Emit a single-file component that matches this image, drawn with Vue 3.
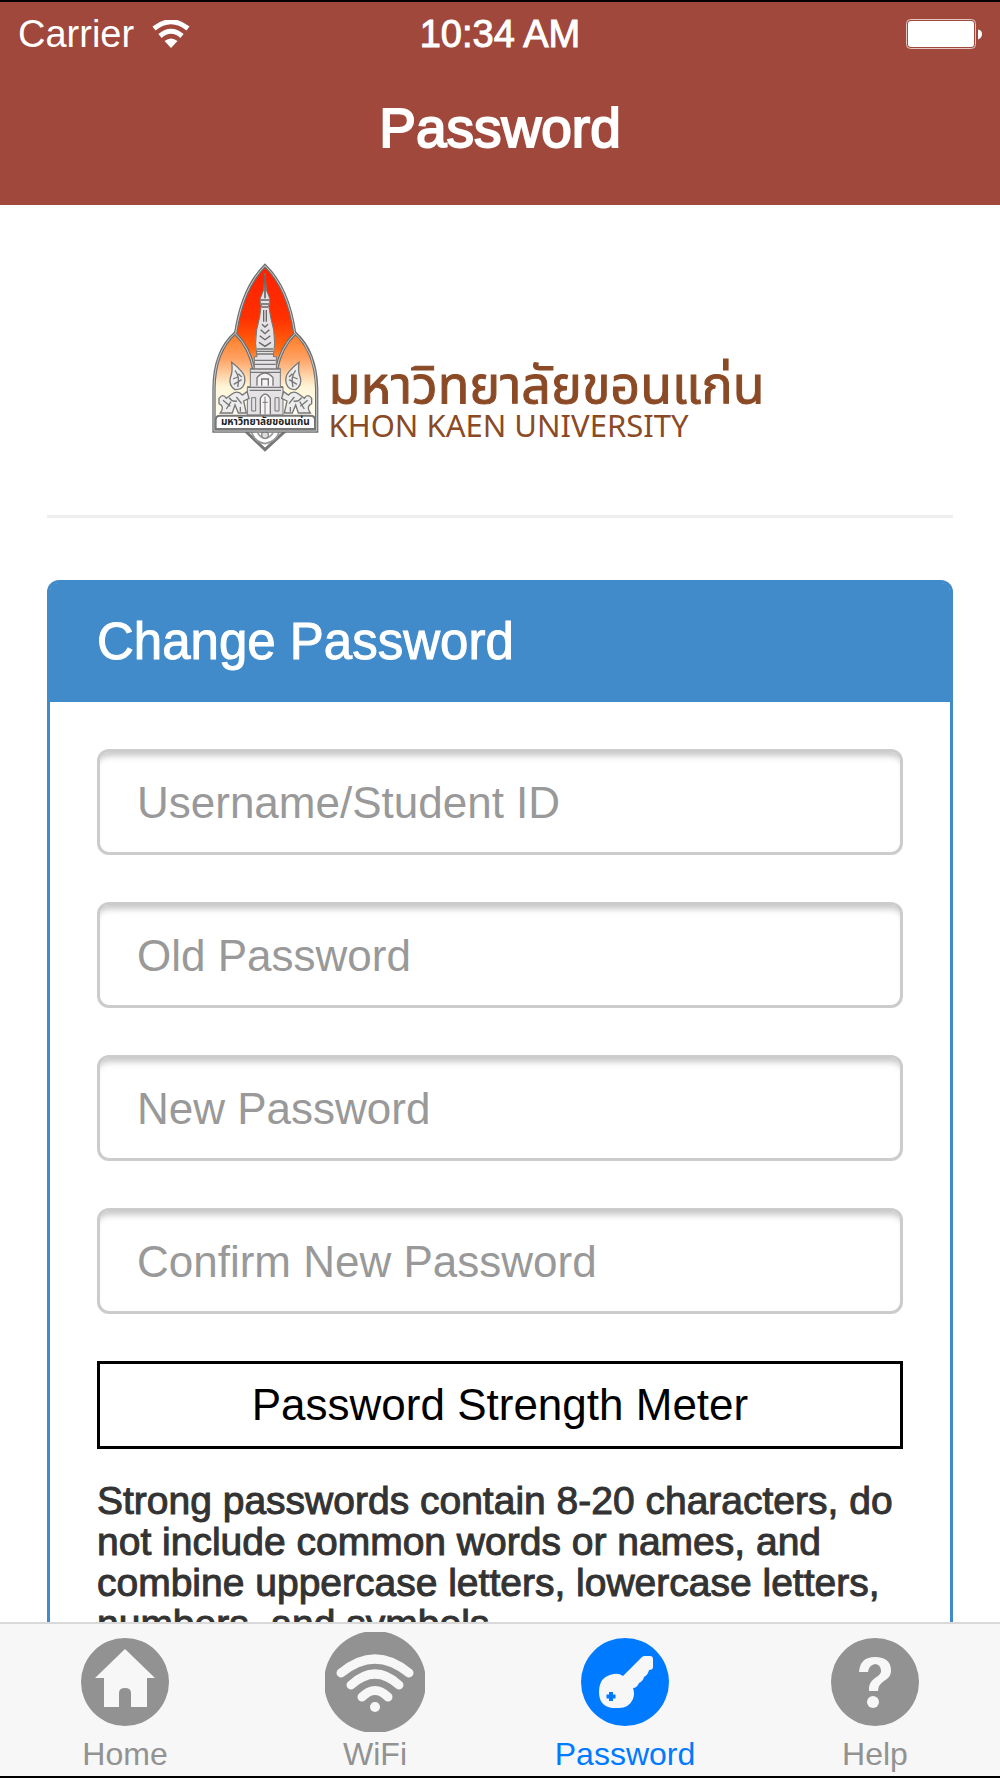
<template>
  <div class="app">
    <header class="top-bar">
      <div class="status-bar">
        <div class="carrier">
          <span>Carrier</span>
          <svg class="signal" viewBox="0 0 38 28" aria-hidden="true">
            <path d="M2 8.5Q19 -5 36 8.5" fill="none" stroke="#fff" stroke-width="5" />
            <path d="M8 16Q19 6.500 30 16" fill="none" stroke="#fff" stroke-width="5" />
            <path d="M12.500 21Q19 16 25.500 21L19 28Z" fill="#fff" />
          </svg>
        </div>
        <span class="clock">10:34 AM</span>
        <svg class="battery" viewBox="0 0 76 30" aria-hidden="true">
          <rect x="0.500" y="0.500" width="69" height="29" rx="4" fill="none" stroke="#e3c8c4" />
          <rect x="2" y="2" width="66" height="26" rx="3" fill="#fff" />
          <path d="M72 10.500Q76 11 76 15T72 20.500Z" fill="#fff" />
        </svg>
      </div>
      <h1 class="page-title">Password</h1>
    </header>

    <main class="content">
      <div class="brand">
        <svg class="emblem" viewBox="30 24 324 570" role="img" aria-label="Khon Kaen University">
          <defs>
            <linearGradient id="flame" x1="0" y1="0" x2="0" y2="1">
              <stop offset="0" stop-color="#ff2000" />
              <stop offset="0.500" stop-color="#ff3000" />
              <stop offset="0.800" stop-color="#ff6a10" />
              <stop offset="1" stop-color="#ffc890" />
            </linearGradient>
            <linearGradient id="petal" x1="0" y1="0" x2="0" y2="1">
              <stop offset="0" stop-color="#ff7a20" />
              <stop offset="0.250" stop-color="#ff9f60" />
              <stop offset="0.550" stop-color="#fff6d8" />
              <stop offset="1" stop-color="#fff" />
            </linearGradient>
          </defs>
          <path d="M130 525L192 584L256 525Z" fill="#fff" stroke="#777" stroke-width="9" />
          <path d="M152 532Q160 560 192 566Q226 560 234 532M170 534Q192 566 216 534" fill="none" stroke="#999" stroke-width="5" />
          <circle cx="192" cy="540" r="10" fill="#ddd" stroke="#888" stroke-width="4" />
          <path d="M192 32Q262 100 283 235L225 345H160L102 235Q124 100 192 32Z" fill="url(#flame)" />
          <path d="M102 235Q40 290 39 400V528H192V345H160Q145 275 102 235Z" fill="url(#petal)" />
          <path d="M283 235Q344 290 346 400V528H192V345H225Q240 275 283 235Z" fill="url(#petal)" />
          <g fill="none" stroke="#6f6f6f" stroke-width="10">
            <path d="M104 235Q124 100 192 32Q262 100 281 235" />
            <path d="M159 345Q145 275 102 235Q40 290 39 400V528H347V400Q344 290 283 235Q240 275 226 345" />
          </g>
          <g fill="none" stroke="#ccc" stroke-width="3">
            <path d="M104 235Q124 100 192 32Q262 100 281 235" />
            <path d="M159 345Q145 275 102 235Q40 290 39 400V528H347V400Q344 290 283 235Q240 275 226 345" />
          </g>
          <!-- stupa -->
          <path d="M192 55L196 105L206 130V150H203Q207 185 218 225Q224 265 217 305H226V340H238V395H246V480H139V395H148V340H160V305H168Q160 265 167 225Q178 185 181 150H178V130L188 105Z" fill="#e4e2e4" stroke="#777" stroke-width="3" />
          <path d="M192 60V130M180 135H204M180 147H204M182 156H202" stroke="#666" stroke-width="5" />
          <path d="M188 165V200M196 165V200M183 208L192 216L201 208M179 224L192 236L205 224M176 242L192 254L208 242M174 262L192 274L210 262" fill="none" stroke="#666" stroke-width="4" />
          <path d="M168 282H216M167 289H217M166 297H218M162 316H224M162 328H224M150 342H236M148 352H238M140 397H246M146 406H240" fill="none" stroke="#777" stroke-width="4" />
          <path d="M168 392V368Q192 340 216 368V392M182 392V372H202V392M178 478V430Q192 405 208 430V478" fill="#f5f3f3" stroke="#777" stroke-width="4" />
          <path d="M152 428H164V468H152ZM222 428H234V468H222ZM192 425V478M185 442H200" fill="none" stroke="#777" stroke-width="3" />
          <!-- guardians -->
          <g id="guardian" fill="#ececec" stroke="#777" stroke-width="4">
            <path d="M92 322Q108 334 122 350Q136 366 130 386Q124 405 102 404Q82 390 88 368Q96 350 92 322Z" />
            <path d="M102 346Q118 366 110 396M96 372L110 366M98 388L122 374M112 356L122 366" fill="none" />
            <path d="M54 430Q66 414 76 430L92 418Q110 404 124 420L138 410L144 430L128 438L136 474H112L102 450L94 474H58Q72 454 54 446Z" />
            <path d="M66 436L88 454M106 426L122 446M84 428Q94 442 108 438M76 462L90 440M118 456V470" fill="none" />
          </g>
          <use href="#guardian" transform="matrix(-1 0 0 1 386 0)" />
          <path d="M44 520V495Q44 482 58 482H328Q342 482 342 495V522H44Z" fill="#fff" stroke="#777" stroke-width="6" />
          <text class="emblem-text" x="193" y="511" text-anchor="middle">มหาวิทยาลัยขอนแก่น</text>
        </svg>
        <div class="wordmark">
          <span class="name-th">มหาวิทยาลัยขอนแก่น</span>
          <span class="name-en">KHON KAEN UNIVERSITY</span>
        </div>
      </div>

      <hr class="divider">

      <section class="panel">
        <h2 class="panel-heading">Change Password</h2>
        <form class="panel-body" @submit.prevent>
          <input
            v-for="field in fields"
            :key="field.name"
            v-model="form[field.name]"
            class="field"
            :type="field.type"
            :name="field.name"
            :placeholder="field.label"
            :aria-label="field.label"
          >
          <div class="meter">Password Strength Meter</div>
          <p class="hint">
            Strong passwords contain 8-20 characters, do not include common words or names,
            and combine uppercase letters, lowercase letters, numbers, and symbols.
          </p>
        </form>
      </section>
    </main>

    <nav class="tab-bar">
      <a
        v-for="tab in tabs"
        :key="tab.id"
        class="tab"
        :class="{ active: tab.id === current }"
        :href="'#' + tab.id"
        @click.prevent="current = tab.id"
      >
        <span class="tab-icon">
          <svg v-if="tab.id === 'home'" class="icon" viewBox="0 0 88 88" aria-hidden="true">
            <circle cx="44" cy="44" r="44" fill="currentColor" />
            <path d="M44 11L74 40H66V69H50V55Q50 50 44 50T38 55V69H23V40H14Z" fill="#f7f7f7" />
          </svg>
          <svg v-else-if="tab.id === 'wifi'" class="icon large" viewBox="0 0 100 100" aria-hidden="true">
            <circle cx="50" cy="50" r="51" fill="currentColor" />
            <g fill="none" stroke="#f7f7f7" stroke-width="9" stroke-linecap="round">
              <path d="M16 41Q50 13 84 41" />
              <path d="M26 53Q50 31 74 53" />
              <path d="M37 65Q50 52 63 65" />
            </g>
            <circle cx="50" cy="75" r="5" fill="#f7f7f7" />
          </svg>
          <svg v-else-if="tab.id === 'password'" class="icon" viewBox="0 0 88 88" aria-hidden="true">
            <circle cx="44" cy="44" r="44" fill="currentColor" />
            <path d="M61 19Q62 18 64 18H69Q72 18 72 21V29Q72 32 68 32Q67 37 63 39Q62 43 58 45Q56 50 52 50Q54 56 52 61Q48 70 38 70H31Q18 68 18 54Q18 38 33 36Q38 35 42 38Z" fill="#f7f7f7" />
            <path d="M30 54V63M25.500 58.500H34.500" stroke="currentColor" stroke-width="4" />
          </svg>
          <svg v-else class="icon" viewBox="0 0 88 88" aria-hidden="true">
            <circle cx="44" cy="44" r="44" fill="currentColor" />
            <path d="M28 34Q29 19 44 19Q60 19 60 33Q60 39 53 43Q47 47 47 53H38Q37 45 44 40Q51 36 50 32Q49 26 44 26Q38 27 37 34Z" fill="#f7f7f7" />
            <circle cx="42" cy="64" r="6" fill="#f7f7f7" />
          </svg>
        </span>
        <span>{{ tab.label }}</span>
      </a>
    </nav>
  </div>
</template>

<script setup>
import { reactive, ref } from 'vue'

const fields = [
  { name: 'username', label: 'Username/Student ID', type: 'text' },
  { name: 'oldPassword', label: 'Old Password', type: 'password' },
  { name: 'newPassword', label: 'New Password', type: 'password' },
  { name: 'confirmPassword', label: 'Confirm New Password', type: 'password' },
]

const form = reactive({ username: '', oldPassword: '', newPassword: '', confirmPassword: '' })

const tabs = [
  { id: 'home', label: 'Home' },
  { id: 'wifi', label: 'WiFi' },
  { id: 'password', label: 'Password' },
  { id: 'help', label: 'Help' },
]

const current = ref('password')
</script>

<style scoped>
* { box-sizing: border-box; }
.app { display: flex; flex-direction: column; height: 100vh; border-top: 2px solid #000; border-bottom: 2px solid #000; background: #fff; font-family: "Helvetica Neue", "Liberation Sans", Arial, sans-serif; }
.top-bar { flex: none; background: #a0483c; color: #fff; padding-bottom: 47px; }
.status-bar { display: grid; grid-template-columns: 1fr auto 1fr; align-items: center; height: 64px; padding: 0 18px; font-size: 38px; line-height: 44px; }
.carrier { display: flex; align-items: center; gap: 18px; }
.signal { width: 38px; height: 28px; }
.clock { -webkit-text-stroke: 1px currentColor; }
.battery { width: 76px; height: 30px; justify-self: end; }
.page-title { margin: 32px 0 0; font-size: 55px; font-weight: 400; line-height: 60px; text-align: center; -webkit-text-stroke: 2px currentColor; }

.content { flex: 1; min-height: 0; overflow-y: auto; scrollbar-width: none; padding: 0 47px; }
.brand { display: flex; justify-content: center; align-items: flex-end; gap: 10px; padding: 58px 0 62px; }
.emblem { width: 108px; height: 190px; }
.emblem-text { font-family: "Noto Sans Thai", sans-serif; font-size: 30px; font-weight: 700; fill: #222; }
.wordmark { display: flex; flex-direction: column; min-width: 461px; padding-bottom: 12px; color: #8b4a26; font-family: "Noto Sans", "Noto Sans Thai", sans-serif; white-space: nowrap; }
.name-th { font-size: 52px; line-height: 53px; -webkit-text-stroke: 1px currentColor; }
.name-en { font-size: 31px; line-height: 32px; }
.divider { margin: 0 0 62px; border: 0; border-top: 3px solid #eee; }

.panel { border: 3px solid #428bca; border-radius: 12px; }
.panel-heading { margin: 0; padding: 30px 47px 32px; background: #428bca; border-radius: 8px 8px 0 0; color: #fff; font-size: 51px; font-weight: 400; line-height: 57px; -webkit-text-stroke: 1px currentColor; }
.panel-body { display: flex; flex-direction: column; gap: 47px; padding: 47px; }
.field { width: 100%; height: 106px; padding: 2px 37px 0; border: 3px solid #ccc; border-radius: 12px; background: #fff; box-shadow: inset 0 9px 6px -5px rgba(0, 0, 0, 0.22); font: inherit; font-size: 44px; line-height: 50px; color: #555; }
.field::placeholder { color: #999; opacity: 1; }
.meter { padding: 16px 0; border: 3px solid #000; font-size: 44px; line-height: 50px; text-align: center; color: #000; }
.hint { margin: -16px 0 0; font-size: 39px; line-height: 41px; color: #333; -webkit-text-stroke: 1px currentColor; }

.tab-bar { flex: none; display: grid; grid-template-columns: repeat(4, 1fr); border-top: 2px solid #d9d9d9; background: #f7f7f7; }
.tab { display: flex; flex-direction: column; align-items: center; padding: 8px 0 0; color: #929292; font-size: 32px; line-height: 44px; text-decoration: none; }
.tab.active { color: #007aff; }
.tab-icon { display: flex; align-items: center; justify-content: center; height: 100px; }
.icon { width: 88px; height: 88px; }
.icon.large { width: 100px; height: 100px; }
</style>

<style>
body { margin: 0; background: #fff; }
</style>
